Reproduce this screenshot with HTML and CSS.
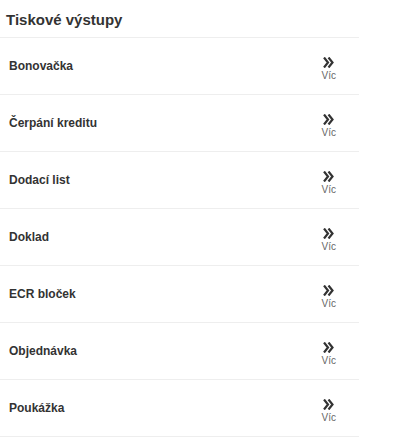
FILE: index.html
```html
<!DOCTYPE html>
<html lang="cs">
<head>
  <meta charset="UTF-8">
  <title>Tiskové výstupy</title>
  <link rel="stylesheet" href="styles.css">
</head>
<body>
  <div class="panel">
    <h1>Tiskové výstupy</h1>

    <div class="row"><span class="name">Bonovačka</span><a class="more"><svg viewBox="0 0 11 11" width="11" height="11"><path d="M1 0.5 L5 5.5 L1 10.5 M5.5 0.5 L9.5 5.5 L5.5 10.5" fill="none" stroke="#333" stroke-width="2.2"/></svg><span>Víc</span></a></div>
    <div class="row"><span class="name">Čerpání kreditu</span><a class="more"><svg viewBox="0 0 11 11" width="11" height="11"><path d="M1 0.5 L5 5.5 L1 10.5 M5.5 0.5 L9.5 5.5 L5.5 10.5" fill="none" stroke="#333" stroke-width="2.2"/></svg><span>Víc</span></a></div>
    <div class="row"><span class="name">Dodací list</span><a class="more"><svg viewBox="0 0 11 11" width="11" height="11"><path d="M1 0.5 L5 5.5 L1 10.5 M5.5 0.5 L9.5 5.5 L5.5 10.5" fill="none" stroke="#333" stroke-width="2.2"/></svg><span>Víc</span></a></div>
    <div class="row"><span class="name">Doklad</span><a class="more"><svg viewBox="0 0 11 11" width="11" height="11"><path d="M1 0.5 L5 5.5 L1 10.5 M5.5 0.5 L9.5 5.5 L5.5 10.5" fill="none" stroke="#333" stroke-width="2.2"/></svg><span>Víc</span></a></div>
    <div class="row"><span class="name">ECR bloček</span><a class="more"><svg viewBox="0 0 11 11" width="11" height="11"><path d="M1 0.5 L5 5.5 L1 10.5 M5.5 0.5 L9.5 5.5 L5.5 10.5" fill="none" stroke="#333" stroke-width="2.2"/></svg><span>Víc</span></a></div>
    <div class="row"><span class="name">Objednávka</span><a class="more"><svg viewBox="0 0 11 11" width="11" height="11"><path d="M1 0.5 L5 5.5 L1 10.5 M5.5 0.5 L9.5 5.5 L5.5 10.5" fill="none" stroke="#333" stroke-width="2.2"/></svg><span>Víc</span></a></div>
    <div class="row"><span class="name">Poukážka</span><a class="more"><svg viewBox="0 0 11 11" width="11" height="11"><path d="M1 0.5 L5 5.5 L1 10.5 M5.5 0.5 L9.5 5.5 L5.5 10.5" fill="none" stroke="#333" stroke-width="2.2"/></svg><span>Víc</span></a></div>
  </div>
</body>
</html>
```

FILE: styles.css
```css
body {
  margin: 0;
  padding: 0;
  background: #fff;
  font-family: "Liberation Sans", Arial, sans-serif;
  color: #333;
}

.panel {
  width: 359px;
}

h1 {
  margin: 0;
  padding: 0 6px;
  height: 37px;
  line-height: 39px;
  font-size: 15px;
  font-weight: bold;
  border-bottom: 1px solid #eee;
}

.row {
  height: 56px;
  border-bottom: 1px solid #eee;
  display: flex;
  align-items: center;
  justify-content: space-between;
  padding: 0 23px 0 9px;
}

.row .name {
  font-size: 12px;
  font-weight: bold;
}

.more {
  display: flex;
  flex-direction: column;
  align-items: center;
  margin-top: 6px;
  cursor: pointer;
}

.more svg {
  display: block;
}

.more span {
  font-size: 10px;
  color: #666;
  line-height: 12px;
  margin-top: 2px;
}
```
